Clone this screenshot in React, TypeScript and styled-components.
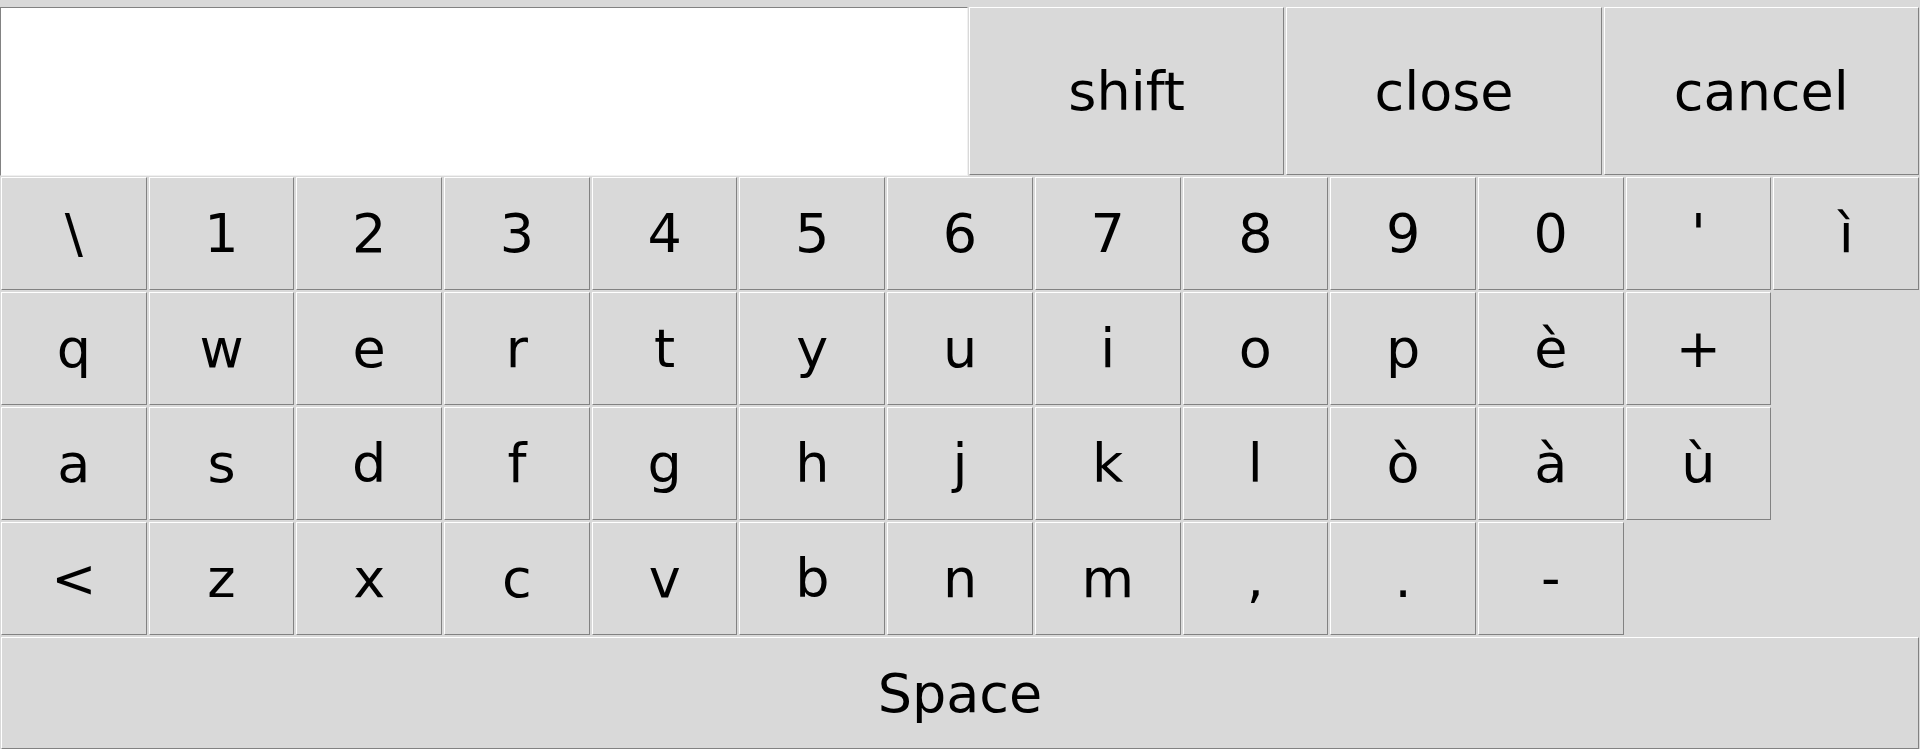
import React from "react";
import styled, { createGlobalStyle } from "styled-components";

const GlobalStyle = createGlobalStyle`
  html, body {
    margin: 0;
    padding: 0;
    background: #d9d9d9;
    overflow: hidden;
  }
  #root {
    width: 1920px;
  }
`;

const Frame = styled.div`
  box-sizing: border-box;
  width: 1920px;
  height: 750px;
  padding-top: 6px;
  display: grid;
  grid-template-rows: 170px 1fr;
  background: #d9d9d9;
  font-family: "DejaVu Sans", "Liberation Sans", sans-serif;
`;

const TopBar = styled.div`
  display: flex;
  min-height: 0;
`;

const Entry = styled.input`
  box-sizing: border-box;
  width: 968px;
  flex: 0 0 968px;
  height: 169px;
  margin: 1px 0 0 0;
  padding: 0 4px;
  background: #ffffff;
  border-style: solid;
  border-width: 1px;
  border-color: #828282 #f0f0f0 #f0f0f0 #828282;
  outline: none;
  font-family: inherit;
  font-size: 54px;
  color: #000;
`;

const KeyButton = styled.button<{ $wide?: boolean }>`
  box-sizing: border-box;
  margin: 1px;
  padding: 0;
  min-width: 0;
  min-height: 0;
  display: flex;
  align-items: center;
  justify-content: center;
  background: #d9d9d9;
  border-style: solid;
  border-width: 1px;
  border-color: #ffffff #828282 #828282 #ffffff;
  border-radius: 0;
  font-family: "DejaVu Sans", "Liberation Sans", sans-serif;
  font-size: 54px;
  line-height: normal;
  color: #000000;
  cursor: pointer;
  ${(p) => (p.$wide ? "grid-column: 1 / -1;" : "")}
`;

const TopButton = styled(KeyButton)`
  flex: 1 1 0;
`;

const KeyGrid = styled.div`
  display: grid;
  grid-template-columns: repeat(13, 1fr);
  grid-template-rows: 115px 115px 115px 115px 1fr;
  min-height: 0;
`;

const Blank = styled.div<{ $span: number }>`
  grid-column: span ${(p) => p.$span};
`;

const rows: string[][] = [
  ["\\", "1", "2", "3", "4", "5", "6", "7", "8", "9", "0", "'", "ì"],
  ["q", "w", "e", "r", "t", "y", "u", "i", "o", "p", "è", "+"],
  ["a", "s", "d", "f", "g", "h", "j", "k", "l", "ò", "à", "ù"],
  ["<", "z", "x", "c", "v", "b", "n", "m", ",", ".", "-"],
];

export default function App() {
  return (
    <>
      <GlobalStyle />
      <Frame>
        <TopBar>
          <Entry type="text" defaultValue="" />
          <TopButton>shift</TopButton>
          <TopButton>close</TopButton>
          <TopButton>cancel</TopButton>
        </TopBar>
        <KeyGrid>
          {rows.map((row, ri) => (
            <React.Fragment key={ri}>
              {row.map((k, ki) => (
                <KeyButton key={ki}>{k}</KeyButton>
              ))}
              {row.length < 13 && <Blank $span={13 - row.length} />}
            </React.Fragment>
          ))}
          <KeyButton $wide>Space</KeyButton>
        </KeyGrid>
      </Frame>
    </>
  );
}
